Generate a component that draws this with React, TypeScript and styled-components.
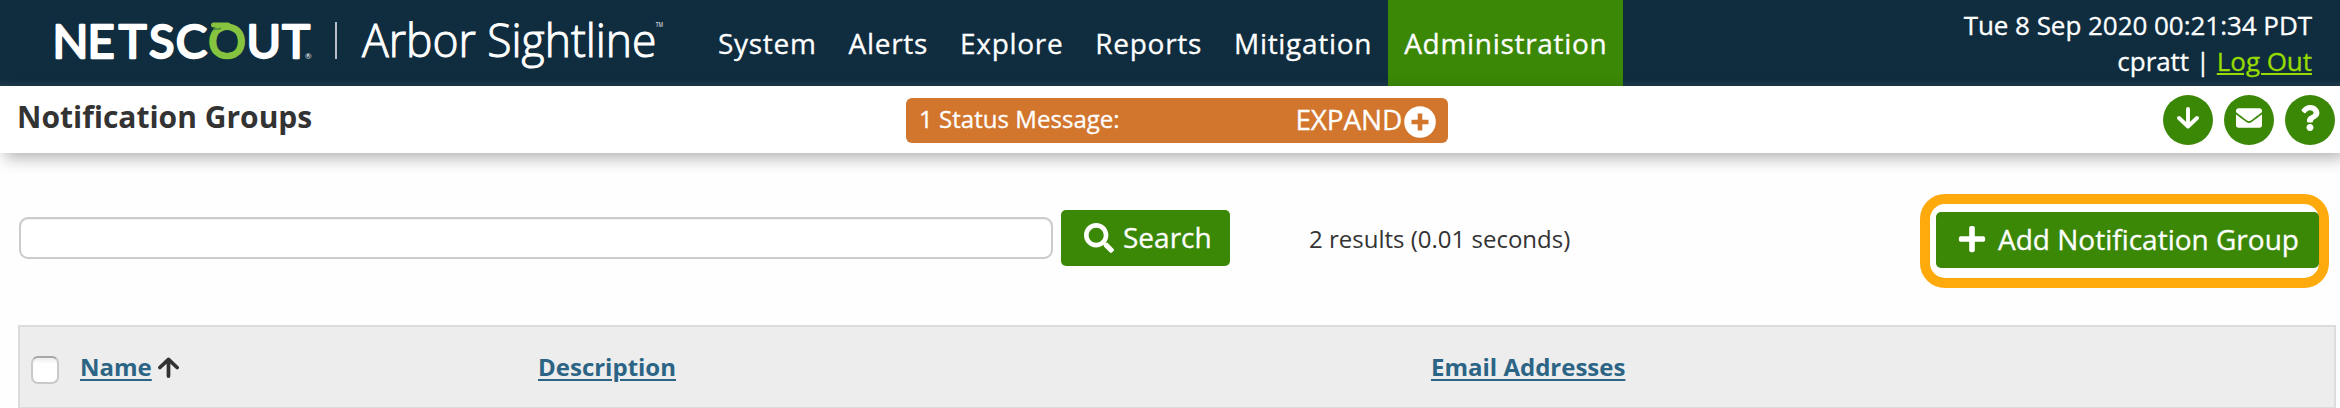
import React from "react";
import styled, { createGlobalStyle } from "styled-components";
import { FaEnvelope, FaPlus, FaQuestion, FaSearch } from "react-icons/fa";

const GlobalStyle = createGlobalStyle`
  *, *::before, *::after { box-sizing: border-box; }
  body {
    margin: 0;
    background: #fefefe;
    color: #333;
    font-family: "Open Sans", sans-serif;
    overflow: hidden;
  }
`;

const Page = styled.div`
  display: flex;
  flex-direction: column;
  width: 2340px;
  height: 408px;
  overflow: hidden;
`;

const TopBar = styled.header`
  display: flex;
  height: 86px;
  flex: none;
  color: #fff;
  background: linear-gradient(#0f2d3f 79px, #1f3b4d 86px);
  -webkit-text-stroke: 0.3px;
`;

const Brand = styled.svg`
  display: block;
  flex: none;
  width: 702px;
  height: 86px;
  -webkit-text-stroke: initial;
`;

const Nav = styled.nav`
  display: flex;
`;

const NavItem = styled.a<{ $active?: boolean }>`
  padding: 0 16px;
  font-size: 28px;
  line-height: 87px;
  letter-spacing: 0.7px;
  white-space: nowrap;
  background: ${(p) => (p.$active ? "#3b8807" : "transparent")};
`;

const Session = styled.div`
  margin-left: auto;
  padding: 7px 28px 0 0;
  font-size: 26px;
  line-height: 36px;
  letter-spacing: -0.04px;
  text-align: right;
`;

const LogOut = styled.a`
  color: #97db00;
  text-decoration: underline;
  text-decoration-thickness: 2px;
  text-underline-offset: 2px;
`;

const TitleBar = styled.div`
  display: grid;
  grid-template-columns: 906px 542px 1fr;
  height: 67px;
  flex: none;
  background: #fff;
  box-shadow: 5px 5px 15px rgba(0, 0, 0, 0.3);
`;

const Title = styled.h1`
  margin: 0;
  padding-left: 17px;
  font-size: 30px;
  font-weight: 700;
  line-height: 62px;
`;

const Status = styled.div`
  display: flex;
  align-items: center;
  height: 45px;
  margin-top: 12px;
  padding: 0 12px 0 13px;
  border-radius: 6px;
  color: #fff;
  background: #d2752d;
  -webkit-text-stroke: 0.3px;
`;

const StatusText = styled.span`
  padding-bottom: 4px;
  font-size: 24px;
  line-height: 38px;
  letter-spacing: 0.04px;
`;

const Expand = styled.span`
  margin: 0 2px 2px auto;
  font-size: 28px;
  line-height: 43px;
  letter-spacing: -0.2px;
`;

const ExpandIcon = styled.svg`
  width: 32px;
  height: 32px;
  margin-top: 2px;
`;

const Actions = styled.div`
  display: flex;
  justify-content: flex-end;
  gap: 11px;
  padding: 9px 5px 0 0;
`;

const RoundButton = styled.button`
  display: flex;
  align-items: center;
  justify-content: center;
  width: 50px;
  height: 50px;
  padding: 0 0 4px;
  border: 0;
  border-radius: 50%;
  color: #fff;
  background: #3b8807;
`;

const Toolbar = styled.div`
  display: flex;
  align-items: flex-start;
  height: 172px;
  flex: none;
  padding: 41px 11px 0 19px;
`;

const SearchInput = styled.input`
  width: 1034px;
  height: 42px;
  margin: 23px 8px 0 0;
  border: 2px solid #cbcbcb;
  border-radius: 9px;
  background: #fff;
  box-shadow: inset 0 1px 1px #f2f2f2;
`;

const Button = styled.button<{ $width: number }>`
  display: flex;
  align-items: center;
  width: ${(p) => p.$width}px;
  height: 56px;
  padding: 0 0 2px 23px;
  border: 0;
  border-radius: 5px;
  color: #fff;
  background: #3b8807;
  font: 28px "Open Sans", sans-serif;
  white-space: nowrap;
  -webkit-text-stroke: 0.3px;
`;

const SearchButton = styled(Button)`
  margin-top: 16px;
  gap: 9px;
  padding-bottom: 3px;
  svg { margin-top: 2px; }
`;

const AddButton = styled(Button)`
  padding-left: 21px;
  gap: 11px;
`;

const Results = styled.span`
  margin: 24px 0 0 79px;
  font-size: 24px;
  line-height: 42px;
`;

const Highlight = styled.div`
  width: 409px;
  height: 94px;
  margin-left: auto;
  padding: 8px 0 0 6px;
  border: 10px solid #ffaa0c;
  border-radius: 25px;
`;

const TableHead = styled.div`
  display: grid;
  grid-template-columns: 60px 458px 893px 1fr;
  align-items: center;
  height: 84px;
  flex: none;
  margin: 0 4px 0 18px;
  border: 2px solid #dcdcdc;
  background: #ededed;
`;

const Checkbox = styled.span`
  display: block;
  width: 28px;
  height: 28px;
  margin: 5px 0 0 11px;
  border: 2px solid #c9c9c9;
  border-top-color: #a8a8a8;
  border-radius: 7px;
  background: linear-gradient(#eee, #fff 6px);
`;

const Column = styled.div`
  display: flex;
  align-items: center;
  gap: 6px;
  font-size: 24px;
  font-weight: 700;
  line-height: 36px;
`;

const ColumnLink = styled.a`
  color: #2c6485;
  text-decoration: underline;
  text-decoration-thickness: 2px;
  text-underline-offset: 3px;
`;

const Arrow = ({ down, size, color }: { down?: boolean; size: number; color: string }) => (
  <svg width={size} height={size} viewBox="0 0 22 22" fill="none" stroke={color} strokeWidth={3.9} strokeLinecap="round" strokeLinejoin="round">
    {down ? <path d="M11 2V19M2 11L11 19.5L20 11" /> : <path d="M11 20V3M2 11L11 2.5L20 11" />}
  </svg>
);

const letters: [string, number][] = [
  ["N", 70.5], ["E", 101.2], ["T", 132.7], ["S", 161.7], ["C", 191.5], ["U", 263.8], ["T", 296.2],
];

const Logo = () => (
  <Brand viewBox="0 0 702 86">
    <g fontFamily="Lato, sans-serif" fontSize="47" textAnchor="middle" strokeWidth="2.4" strokeLinejoin="round">
      {letters.map(([c, x]) => (
        <text key={x} x={x} y="57.5" fill="#fff" stroke="#fff">{c}</text>
      ))}
      <text x="227" y="57.5" fill="#86c440" stroke="#86c440">O</text>
    </g>
    <path d="M213.5 25H228" stroke="#86c440" strokeWidth="5" strokeLinecap="round" />
    <path d="M213 29.5L221 28.5" stroke="#4f8a3a" strokeWidth="1.6" />
    <text x="305" y="59" fill="#fff" fontFamily="Lato, sans-serif" fontSize="8">®</text>
    <path d="M336 22V59" stroke="#fff" strokeWidth="1.4" />
    <text x="362" y="57" fill="#fff" stroke="#fff" strokeWidth="1" fontFamily="Open Sans, sans-serif" fontWeight="300" fontSize="45.5" textLength="294.5" lengthAdjust="spacingAndGlyphs">Arbor Sightline</text>
    <text x="655.8" y="27" fill="#fff" fontFamily="Open Sans, sans-serif" fontSize="6.5" textLength="7.2" lengthAdjust="spacingAndGlyphs">TM</text>
  </Brand>
);

const sections = ["System", "Alerts", "Explore", "Reports", "Mitigation", "Administration"];

export default function App() {
  return (
    <>
      <GlobalStyle />
      <Page>
        <TopBar>
          <Logo />
          <Nav>
            {sections.map((s) => (
              <NavItem key={s} $active={s === "Administration"}>{s}</NavItem>
            ))}
          </Nav>
          <Session>
            <div>Tue 8 Sep 2020 00:21:34 PDT</div>
            <div>cpratt | <LogOut>Log Out</LogOut></div>
          </Session>
        </TopBar>
        <TitleBar>
          <Title>Notification Groups</Title>
          <Status>
            <StatusText>1 Status Message:</StatusText>
            <Expand>EXPAND</Expand>
            <ExpandIcon viewBox="0 0 32 32">
              <circle cx="16" cy="16" r="15.8" fill="#fff" />
              <path d="M16 7.5V24.5M7.5 16H24.5" stroke="#d2752d" strokeWidth="4.6" />
            </ExpandIcon>
          </Status>
          <Actions>
            <RoundButton><Arrow down size={22} color="#fff" /></RoundButton>
            <RoundButton><FaEnvelope size={26} /></RoundButton>
            <RoundButton><FaQuestion size={26} /></RoundButton>
          </Actions>
        </TitleBar>
        <Toolbar>
          <SearchInput />
          <SearchButton $width={169}><FaSearch size={30} />Search</SearchButton>
          <Results>2 results (0.01 seconds)</Results>
          <Highlight>
            <AddButton $width={383}><FaPlus size={30} />Add Notification Group</AddButton>
          </Highlight>
        </Toolbar>
        <TableHead>
          <Checkbox />
          <Column><ColumnLink>Name</ColumnLink><Arrow size={21} color="#333" /></Column>
          <Column><ColumnLink>Description</ColumnLink></Column>
          <Column><ColumnLink>Email Addresses</ColumnLink></Column>
        </TableHead>
      </Page>
    </>
  );
}
